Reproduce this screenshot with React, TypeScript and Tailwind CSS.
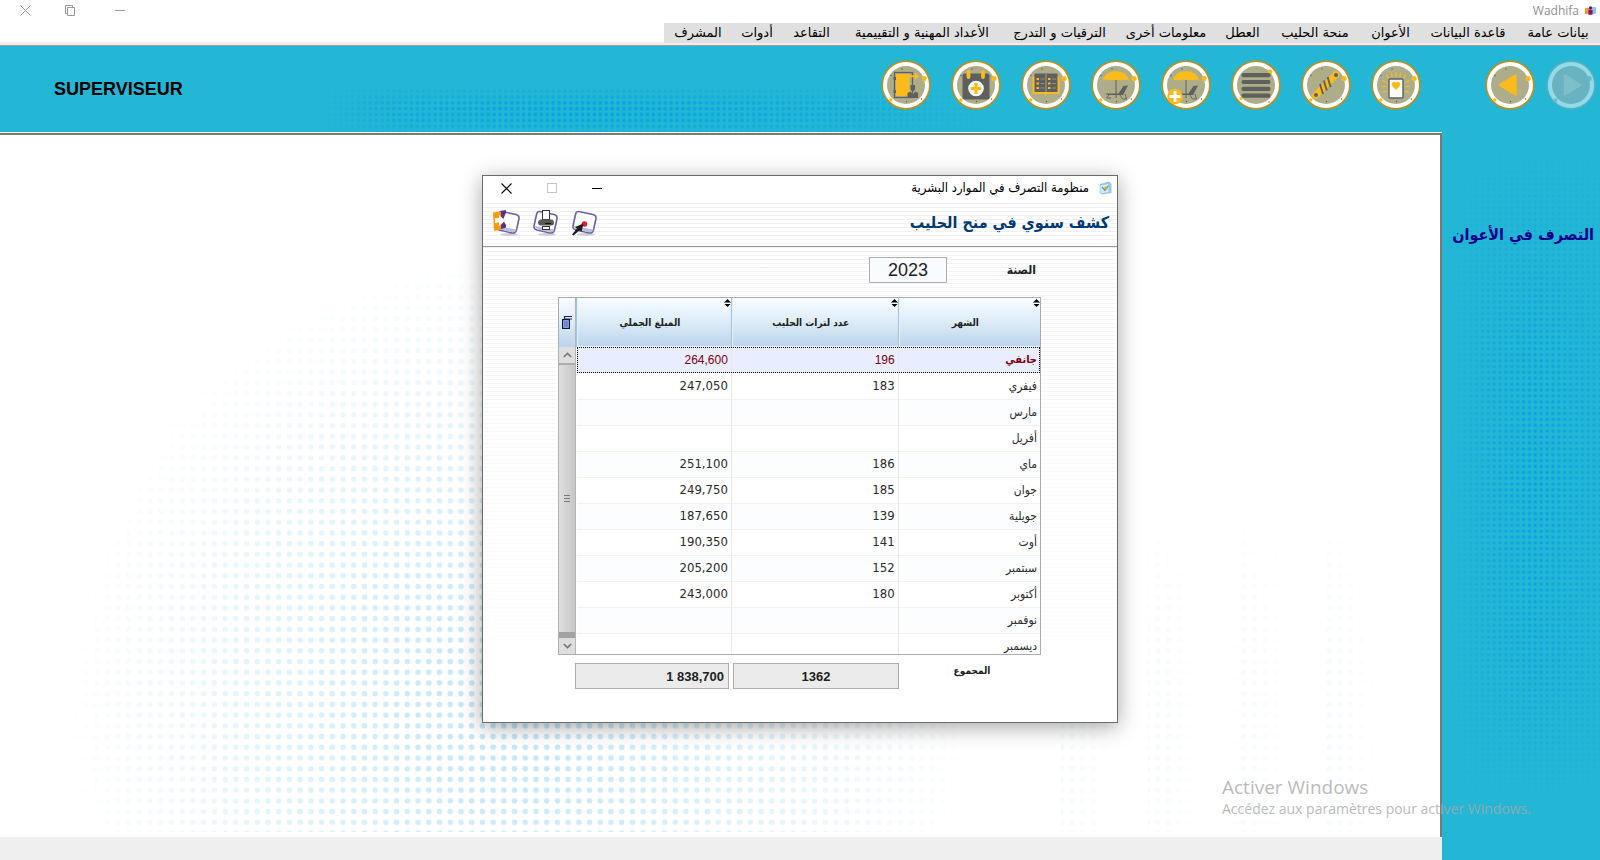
import React from 'react';

// =====================================================
// Types
// =====================================================

interface MenuEntry {
  label: string;
  width: string;
}

interface MilkRow {
  month: string;
  liters: string;
  amount: string;
}

// =====================================================
// Data
// =====================================================

const menuEntries: MenuEntry[] = [
  { label: 'بيانات عامة', width: 'w-[84px]' },
  { label: 'قاعدة البيانات', width: 'w-[96px]' },
  { label: 'الأعوان', width: 'w-[59px]' },
  { label: 'منحة الحليب', width: 'w-[92px]' },
  { label: 'العطل', width: 'w-[53px]' },
  { label: 'معلومات أخرى', width: 'w-[100px]' },
  { label: 'الترقيات و التدرج', width: 'w-[113px]' },
  { label: 'الأعداد المهنية و التقييمية', width: 'w-[162px]' },
  { label: 'التقاعد', width: 'w-[59px]' },
  { label: 'أدوات', width: 'w-[50px]' },
  { label: 'المشرف', width: 'w-[68px]' },
];

const milkRows: MilkRow[] = [
  { month: 'جانفي', liters: '196', amount: '264,600' },
  { month: 'فيفري', liters: '183', amount: '247,050' },
  { month: 'مارس', liters: '', amount: '' },
  { month: 'أفريل', liters: '', amount: '' },
  { month: 'ماي', liters: '186', amount: '251,100' },
  { month: 'جوان', liters: '185', amount: '249,750' },
  { month: 'جويلية', liters: '139', amount: '187,650' },
  { month: 'أوت', liters: '141', amount: '190,350' },
  { month: 'سبتمبر', liters: '152', amount: '205,200' },
  { month: 'أكتوبر', liters: '180', amount: '243,000' },
  { month: 'نوفمبر', liters: '', amount: '' },
  { month: 'ديسمبر', liters: '', amount: '' },
];

// =====================================================
// Dotted backgrounds
// =====================================================

const HeaderDots: React.FC = () => (
  <svg className="absolute left-[320px] bottom-0" width="670" height="44" aria-hidden="true">
    <defs>
      <pattern id="hd-dots" width="5.9" height="5.9" patternUnits="userSpaceOnUse">
        <circle cx="3" cy="3" r="1.9" fill="#00a2e2" />
      </pattern>
      <linearGradient id="hd-fade" x1="0" x2="1" y1="0" y2="0">
        <stop offset="0" stopColor="#fff" stopOpacity="0" />
        <stop offset="0.12" stopColor="#fff" stopOpacity="0.6" />
        <stop offset="0.4" stopColor="#fff" stopOpacity="0.9" />
        <stop offset="0.8" stopColor="#fff" stopOpacity="0.5" />
        <stop offset="1" stopColor="#fff" stopOpacity="0" />
      </linearGradient>
      <linearGradient id="hd-edge" x1="0" x2="0" y1="0" y2="1">
        <stop offset="0" stopColor="#000" stopOpacity="0.8" />
        <stop offset="0.4" stopColor="#000" stopOpacity="0" />
        <stop offset="0.7" stopColor="#000" stopOpacity="0" />
        <stop offset="1" stopColor="#000" stopOpacity="0.6" />
      </linearGradient>
      <mask id="hd-mask">
        <rect width="670" height="44" fill="url(#hd-fade)" />
        <rect width="670" height="44" fill="url(#hd-edge)" />
      </mask>
    </defs>
    <rect width="670" height="44" fill="url(#hd-dots)" mask="url(#hd-mask)" />
  </svg>
);

const SidebarDots: React.FC = () => (
  <svg className="absolute right-0 top-[14px]" width="150" height="652" aria-hidden="true">
    <defs>
      <pattern id="sd-dots" width="5.88" height="5.88" patternUnits="userSpaceOnUse">
        <circle cx="3" cy="3" r="1.700" fill="#009fe3" />
      </pattern>
      <linearGradient id="sd-fade" x1="0" x2="1" y1="0" y2="0">
        <stop offset="0" stopColor="#fff" stopOpacity="0" />
        <stop offset="0.2" stopColor="#fff" stopOpacity="0.45" />
        <stop offset="0.55" stopColor="#fff" stopOpacity="0.95" />
        <stop offset="1" stopColor="#fff" stopOpacity="0.5" />
      </linearGradient>
      <linearGradient id="sd-edge" x1="0" x2="0" y1="0" y2="1">
        <stop offset="0" stopColor="#000" />
        <stop offset="0.3" stopColor="#000" stopOpacity="0.2" />
        <stop offset="0.5" stopColor="#000" stopOpacity="0" />
        <stop offset="0.8" stopColor="#000" stopOpacity="0.3" />
        <stop offset="1" stopColor="#000" />
      </linearGradient>
      <mask id="sd-mask">
        <rect width="150" height="652" fill="url(#sd-fade)" />
        <rect width="150" height="652" fill="url(#sd-edge)" />
      </mask>
    </defs>
    <rect width="150" height="652" fill="url(#sd-dots)" mask="url(#sd-mask)" />
  </svg>
);

const DesktopDots: React.FC = () => (
  <svg className="absolute left-0 top-0 h-full w-full" aria-hidden="true">
    <defs>
      <pattern id="dd-dots" x="5.3" y="6.5" width="10.72" height="10.72" patternUnits="userSpaceOnUse">
        <circle cx="5.4" cy="5.4" r="2.8" fill="#bfe6f8" />
      </pattern>
      <radialGradient id="dd-fade" gradientUnits="userSpaceOnUse" cx="520" cy="570" r="460">
        <stop offset="0" stopColor="#fff" />
        <stop offset="0.2" stopColor="#fff" stopOpacity="0.85" />
        <stop offset="1" stopColor="#fff" stopOpacity="0" />
      </radialGradient>
      <linearGradient id="dd-band" x1="0" x2="1" y1="0" y2="0">
        <stop offset="0" stopColor="#fff" stopOpacity="0.18" />
        <stop offset="1" stopColor="#fff" stopOpacity="0" />
      </linearGradient>
      <linearGradient id="dd-rise" x1="0" x2="0" y1="0" y2="1">
        <stop offset="0" stopColor="#000" />
        <stop offset="0.5" stopColor="#000" stopOpacity="0" />
      </linearGradient>
      <mask id="dd-mask" maskUnits="userSpaceOnUse" x="0" y="0" width="1440" height="900">
        <rect width="1440" height="900" fill="url(#dd-fade)" />
        <rect x="1061" y="340" width="60" height="360" fill="url(#dd-band)" />
        <rect x="1148" y="340" width="60" height="360" fill="url(#dd-band)" />
        <rect x="1235" y="340" width="60" height="360" fill="url(#dd-band)" />
        <rect x="1322" y="340" width="60" height="360" fill="url(#dd-band)" />
        <rect x="1061" y="340" width="360" height="360" fill="url(#dd-rise)" />
      </mask>
    </defs>
    <rect width="1440" height="697" fill="url(#dd-dots)" mask="url(#dd-mask)" />
  </svg>
);

// =====================================================
// Toolbar icons
// =====================================================

const Medallion: React.FC<{ children: React.ReactNode }> = ({ children }) => (
  <svg width="50" height="50" viewBox="0 0 50 50" aria-hidden="true">
    <circle cx="25" cy="25" r="23.8" fill="#fff" stroke="#c68d14" strokeWidth="1.6" />
    <circle cx="25" cy="25" r="19" fill="#aead89" />
    <g fill="#5a5a5a">
      <circle cx="21" cy="9" r="0.7" />
      <circle cx="10" cy="15.500" r="0.7" />
      <circle cx="25.500" cy="41.500" r="0.7" />
      <circle cx="40.500" cy="39" r="0.7" />
    </g>
    <circle cx="43" cy="18.500" r="2.600" fill="#fbbb1c" />
    <circle cx="9.800" cy="40" r="1.700" fill="#fbbb1c" />
    {children}
  </svg>
);

const DoorIcon: React.FC = () => (
  <Medallion>
    <rect x="13.500" y="12.500" width="18" height="25" fill="none" stroke="#5f5f5f" strokeWidth="1.300" />
    <rect x="15" y="14" width="13.500" height="22" fill="#fbbb1c" />
    <path d="M24 15.300h10v-2.600l4.200 3.600-4.200 3.600v-2.600h-10z" fill="#fbbb1c" />
    <path d="M12.500 17h2.500v3h-2.500zM12.500 30h2.500v3h-2.500z" fill="#5f5f5f" />
    <path d="M29.500 25h4.600v3.500a2.300 2.600 0 0 1-4.600 0z" fill="#5f5f5f" />
    <path d="M26.500 38v-5l3-1.500 2.300 3.500 2.300-3.500 3 1.500v5z" fill="#5f5f5f" />
  </Medallion>
);

const CalendarIcon: React.FC = () => (
  <Medallion>
    <rect x="11.500" y="13.500" width="27" height="26" rx="2" fill="#5f5f5f" />
    <path d="M17.500 12v5M32 12v5" stroke="#fbbb1c" strokeWidth="3.800" strokeLinecap="round" />
    <circle cx="25" cy="28.500" r="7.800" fill="#fff" />
    <path d="M25 23v11M19.500 28.500h11" stroke="#fbbb1c" strokeWidth="3.200" />
  </Medallion>
);

const BookIcon: React.FC = () => (
  <Medallion>
    <path d="M11.500 16.500v17.500H23l1.500 2 1.500-2h12.500V16.500z" fill="#fbbb1c" />
    <rect x="13.500" y="13.500" width="23" height="18.500" fill="#5f5f5f" />
    <path d="M25 14v18" stroke="#aead89" strokeWidth="0.900" />
    <path d="M15.500 19H18M15.500 23.500H18M15.500 28H18M27 19h2.500M27 23.500h2.500M27 28h2.500" stroke="#fbbb1c" strokeWidth="2.200" />
    <path d="M19.500 19h4M19.500 23.500h4M19.500 28h4M31 19h4M31 23.500h4M31 28h4" stroke="#9a9a85" strokeWidth="0.800" />
  </Medallion>
);

const Beach: React.FC = () => (
  <>
    <path d="M12 20.500C13 14 19 11.300 25 11.300S37 14 38 20.500q-2-1.600-4.200 0-2.200-1.600-4.400 0-2.200-1.600-4.400 0-2.200-1.600-4.400 0-2.200-1.600-4.400 0-2.200-1.600-4.200 0z" fill="#fbbb1c" />
    <path d="M25 20v18" stroke="#5f5f5f" strokeWidth="1" />
    <path d="M15 33.500h12.500l5-7.500 4.500-.5-5 9.500H16z" fill="#5f5f5f" />
    <path d="M18 35l-2.500 3h4.500M29 35l2.500 4h4l-1.500-5" fill="none" stroke="#5f5f5f" strokeWidth="0.900" />
  </>
);

const UmbrellaIcon: React.FC = () => (
  <Medallion>
    <Beach />
  </Medallion>
);

const UmbrellaPlusIcon: React.FC = () => (
  <Medallion>
    <Beach />
    <circle cx="14" cy="36.500" r="7.700" fill="#fbbb1c" />
    <path d="M14 31v11M8.500 36.500h11" stroke="#fff" strokeWidth="2.800" />
  </Medallion>
);

const LinesIcon: React.FC = () => (
  <svg width="50" height="50" viewBox="0 0 50 50" aria-hidden="true">
    <circle cx="25" cy="25" r="23.8" fill="#fff" stroke="#c68d14" strokeWidth="1.6" />
    <circle cx="25" cy="25" r="19" fill="#aead89" />
    <circle cx="39" cy="12" r="2.400" fill="#fbbb1c" />
    <circle cx="10" cy="38.500" r="1.500" fill="#fbbb1c" />
    <circle cx="38" cy="42" r="0.7" fill="#5a5a5a" />
    <path d="M12.500 15.200h25M12.500 22h25M12.500 28.900h25M12.500 35.700h25" stroke="#5f5f5f" strokeWidth="4.200" strokeLinecap="round" />
  </svg>
);

const BandageIcon: React.FC = () => (
  <Medallion>
    <path d="M14.500 35.500L35 14.500" stroke="#fbbb1c" strokeWidth="6.600" strokeLinecap="round" />
    <circle cx="15" cy="35" r="2" fill="#5f5f5f" />
    <circle cx="35" cy="15" r="2" fill="#5f5f5f" />
    <path d="M19 24l3 10M22.800 20.500l3 10M26.600 17l3 10" stroke="#5f5f5f" strokeWidth="1.900" />
  </Medallion>
);

const HeartCardIcon: React.FC = () => (
  <Medallion>
    <path d="M25 12v5M20 12.500l1.500 4.500M30 12.500L28.500 17M15 15l3 4M35 15l-3 4M11.500 20.500l5 2.500M38.500 20.500l-5 2.500M11 26.500h5M39 26.500h-5M12 32.500l4-1.500M38 32.500L34 31" stroke="#fbbb1c" strokeWidth="1.200" />
    <rect x="18" y="19" width="14" height="19" rx="1" fill="#fff" stroke="#5f5f5f" strokeWidth="1.400" />
    <path d="M25 30l-3.900-4a2.700 2.700 0 0 1 3.900-3.600 2.700 2.700 0 0 1 3.900 3.600z" fill="#fbbb1c" />
  </Medallion>
);

const BackIcon: React.FC = () => (
  <Medallion>
    <path d="M15 25L30.500 15.500V34.500z" fill="#fbbb1c" stroke="#fbbb1c" strokeWidth="2.400" strokeLinejoin="round" />
  </Medallion>
);

const ForwardIcon: React.FC = () => (
  <svg width="50" height="50" viewBox="0 0 50 50" aria-hidden="true">
    <circle cx="25" cy="25" r="23.800" fill="#92dbec" stroke="#5caebd" strokeWidth="1.400" />
    <circle cx="25" cy="25" r="19" fill="#69b2c1" />
    <circle cx="43" cy="18.500" r="2.600" fill="#69b8c4" />
    <circle cx="9.800" cy="40" r="1.700" fill="#69b8c4" />
    <path d="M34 25L19 15.500V34.500z" fill="#7fbfca" stroke="#7fbfca" strokeWidth="2.400" strokeLinejoin="round" />
  </svg>
);

const toolButtons = [
  { label: 'منحة', icon: <HeartCardIcon /> },
  { label: 'حوادث الشغل', icon: <BandageIcon /> },
  { label: 'قائمة', icon: <LinesIcon /> },
  { label: 'إضافة عطلة', icon: <UmbrellaPlusIcon /> },
  { label: 'العطل', icon: <UmbrellaIcon /> },
  { label: 'دفتر', icon: <BookIcon /> },
  { label: 'عطلة مرض', icon: <CalendarIcon /> },
  { label: 'خروج', icon: <DoorIcon /> },
];

// =====================================================
// Dialog icons
// =====================================================

const TileFrame: React.FC = () => (
  <>
    <ellipse cx="15" cy="25.500" rx="9" ry="1.500" fill="#cfcfd6" />
    <path d="M7.500 2.500L22 5.500q3.500 1 3 4L22.500 21q-1 3.500-4.500 3L5 21q-3.500-1-3-4L4.500 5.500q.6-3.200 3-3z" fill="#fff" stroke="#6c62a2" strokeWidth="1.600" />
    <path d="M3 17l19.500 3.500q-1 3-4 2.700L5.500 20.300Q3 19.500 3 17z" fill="#b9bfda" />
  </>
);

const ExitIcon: React.FC = () => (
  <svg width="27" height="28" viewBox="0 0 27 28" aria-hidden="true">
    <g transform="translate(1 0)">
      <TileFrame />
    </g>
    <path d="M7 2l6-1v2.500l-3 7.500 3 5v2.500l-6 2z" fill="#55308f" />
    <path d="M0 3.500l8-1v5l4 4-4 4.500v4.500l-7 1.500z" fill="#ff9a0a" />
    <path d="M2 9l4 .2V6l6 5.500-6 5.500v-3.500l-4 .5z" fill="#fff" />
  </svg>
);

const PrintIcon: React.FC = () => (
  <svg width="27" height="28" viewBox="0 0 27 28" aria-hidden="true">
    <TileFrame />
    <rect x="10.500" y="1.500" width="7" height="9" fill="#fff" stroke="#333" />
    <path d="M8 10.500h12.500q1.500 1 1.500 3.500 0 2-2 2.500H8.500q-2.500-.5-2.500-2.500 0-2.500 2-3.500z" fill="#5a5a5a" />
    <path d="M13 14.500h6" stroke="#111" strokeWidth="1.200" />
    <rect x="10.500" y="17.500" width="7" height="3" fill="#fff" stroke="#333" />
  </svg>
);

const PickIcon: React.FC = () => (
  <svg width="27" height="28" viewBox="0 0 27 28" aria-hidden="true">
    <TileFrame />
    <circle cx="13.500" cy="15" r="2.800" fill="#ec1c2e" />
    <path d="M1 25.500l5-6-2-1.500 8.500-3.500-2 8.500-2-1.700-6 5.200z" fill="#1c1c1c" />
  </svg>
);

const SortIcon: React.FC = () => (
  <svg className="absolute right-0 top-[1px]" width="7" height="8" viewBox="0 0 7 8" aria-hidden="true">
    <path d="M3.500 0L6.500 3h-6zM3.500 8L6.500 5h-6zM0 3.500h7v.6H0z" fill="#000" />
  </svg>
);

// =====================================================
// Table
// =====================================================

const HeadCell: React.FC<{ width: string; children: React.ReactNode }> = ({ width, children }) => (
  <th
    scope="col"
    className={`relative h-[49px] ${width} border-l border-[#9cc4e0] bg-gradient-to-b from-[#f8fcff] via-[#dcebf7] to-[#b9d4ec] p-0 font-['DejaVu_Sans_Condensed','DejaVu_Sans',sans-serif] text-[10px] font-bold text-[#222] shadow-[inset_1px_-1px_0_#e6f3fc]`}
  >
    <SortIcon />
    <span className="pr-2">{children}</span>
  </th>
);

const MilkTable: React.FC = () => (
  <div className="flex h-[358px] overflow-hidden border border-[#adadad] bg-white">
    <table className="grow table-fixed self-start border-collapse">
      <thead>
        <tr>
          <HeadCell width="w-[142px]">الشهر</HeadCell>
          <HeadCell width="w-[167px]">عدد لترات الحليب</HeadCell>
          <HeadCell width="w-[155px]">المبلغ الجملي</HeadCell>
        </tr>
      </thead>
      <tbody>
        {milkRows.map((row, index) => {
          const selected = index === 0;
          const rowClass = selected
            ? 'h-[26px] bg-[#e8edff] text-[#7c0009] outline outline-1 -outline-offset-1 outline-dotted outline-black'
            : 'h-[26px] border-b border-[#eff2ef] text-[#2b2b2b] even:bg-white odd:bg-[#fbfdff]';
          const monthClass = selected
            ? "font-['DejaVu_Sans_Condensed','DejaVu_Sans',sans-serif] text-[11px] font-bold"
            : 'text-[12px]';
          const numberClass = selected
            ? "font-['Liberation_Sans'] text-[12px]"
            : "font-['DejaVu_Sans_Condensed','DejaVu_Sans',sans-serif] text-[13px]";
          return (
            <tr key={row.month} className={rowClass}>
              <td className={`border-l border-[#e9ecdc] p-0 pr-[3px] leading-4 ${monthClass}`}>{row.month}</td>
              <td dir="ltr" className={`border-l border-[#e9ecdc] p-0 pr-[3px] text-right leading-4 ${numberClass}`}>{row.liters}</td>
              <td dir="ltr" className={`p-0 pr-[3px] text-right leading-4 ${numberClass}`}>{row.amount}</td>
            </tr>
          );
        })}
      </tbody>
    </table>

    {/* scroll bar */}
    <div className="flex w-[17px] shrink-0 flex-col border-r border-[#b5b5b5] bg-[#d2d2d2]">
      <button type="button" aria-label="الأعمدة" className="flex h-[49px] items-center justify-center bg-gradient-to-b from-[#f8fcff] via-[#dcebf7] to-[#b9d4ec]">
        <svg width="10" height="13" viewBox="0 0 10 13" aria-hidden="true">
          <path d="M2 .5h8M2.500 0v4M2 3h8" stroke="#16205c" strokeWidth="1.200" />
          <rect x=".6" y="3.600" width="6.800" height="8.800" fill="#a9c0f5" stroke="#10153a" strokeWidth="1.200" />
          <path d="M2 6h4M2 8h4M2 10h4" stroke="#3c51b8" />
        </svg>
      </button>
      <button type="button" aria-label="أعلى" className="flex h-4 items-center justify-center bg-[#dedede]">
        <svg width="9" height="6" viewBox="0 0 9 6" aria-hidden="true">
          <path d="M.8 5l3.700-3.500L8.200 5" fill="none" stroke="#777" strokeWidth="1.700" />
        </svg>
      </button>
      <div className="flex grow flex-col items-center justify-center gap-[2px] border-t-2 border-[#adadad] bg-gradient-to-r from-[#dfdfdf] to-[#c6c6c6]">
        <span className="h-px w-[6px] bg-[#777]"></span>
        <span className="h-px w-[6px] bg-[#777]"></span>
        <span className="h-px w-[6px] bg-[#777]"></span>
      </div>
      <div className="h-[6px] bg-[#a3a3a3]"></div>
      <button type="button" aria-label="أسفل" className="flex h-4 items-center justify-center bg-[#dedede]">
        <svg width="9" height="6" viewBox="0 0 9 6" aria-hidden="true">
          <path d="M.8 1l3.700 3.500L8.200 1" fill="none" stroke="#777" strokeWidth="1.700" />
        </svg>
      </button>
    </div>
  </div>
);

// =====================================================
// Dialog
// =====================================================

const MilkDialog: React.FC = () => (
  <section
    role="dialog"
    aria-labelledby="milk-title"
    className="absolute left-1/2 top-[175px] w-[636px] -translate-x-1/2 border border-[#6a6a6a] bg-white font-['DejaVu_Sans_Condensed','DejaVu_Sans',sans-serif] shadow-[0_4px_20px_rgba(0,0,0,0.35)]"
  >
    <div className="flex h-[24px] items-center gap-[10px] pr-[5px] pl-[13px] text-[13px] text-black">
      <svg width="13" height="14" viewBox="0 0 13 14" aria-hidden="true">
        <path d="M1 3L10 .5 12.500 3v9L3 13.500.5 12z" fill="#8fcbe4" />
        <path d="M1.500 4.500l8-1.500v8l-8 1.500z" fill="#d8eef7" />
        <path d="M3 6l3 3.500 3.500-5" fill="none" stroke="#4f93b3" strokeWidth="1.200" />
        <circle cx="7" cy="7" r="1.800" fill="#d9a441" />
      </svg>
      <span className="grow">منظومة التصرف في الموارد البشرية</span>
      <button type="button" aria-label="تصغير" className="flex w-[20px] justify-center">
        <svg width="10" height="11"><path d="M0 5.500h10" stroke="#000" /></svg>
      </button>
      <button type="button" aria-label="تكبير" disabled className="mr-[15px] flex w-[20px] justify-center">
        <svg width="10" height="10"><rect x=".5" y=".5" width="9" height="9" fill="none" stroke="#c4c4c4" /></svg>
      </button>
      <button type="button" aria-label="إغلاق" className="mr-[16px] flex w-[20px] justify-center">
        <svg width="11" height="11"><path d="M.5.5l10 10M10.500.5l-10 10" stroke="#000" strokeWidth="1.100" /></svg>
      </button>
    </div>

    <div className="bg-[linear-gradient(to_bottom,rgba(255,255,255,0.1)_0%,#fff_95%),repeating-linear-gradient(to_bottom,#fff_0px,#fff_3px,#efefef_3px,#efefef_4px)]">
      <header className="flex h-[47px] items-center gap-[12px] border-b border-[#999] pr-[8px] pl-[10px]">
        <h1 id="milk-title" className="grow text-[16px] leading-6 font-bold text-[#003a75]">كشف سنوي في منح الحليب</h1>
        <button type="button" aria-label="اختيار"><PickIcon /></button>
        <button type="button" aria-label="طباعة"><PrintIcon /></button>
        <button type="button" aria-label="خروج"><ExitIcon /></button>
      </header>

      <div className="pt-[10px] pr-[76px] pb-[33px] pl-[75px]">
        <div className="flex items-center">
          <label htmlFor="year" className="w-[94px] pr-[5px] text-[12px] font-bold text-[#222]">الصنة</label>
          <input
            id="year"
            dir="ltr"
            defaultValue="2023"
            className="h-[26px] w-[78px] border border-[#adadad] bg-[#f8fbff] text-center font-['Liberation_Sans'] text-[18px] text-[#222]"
          />
        </div>

        <div className="pt-[14px] pb-[8px]">
          <MilkTable />
        </div>

        <div className="flex items-start gap-[4px]">
          <span id="total-label" className="w-[138px] text-center text-[10px] leading-4 font-bold text-[#222]">المجموع</span>
          <input
            readOnly
            dir="ltr"
            aria-labelledby="total-label"
            value="1362"
            className="h-[26px] w-[166px] border border-[#adadad] bg-[#ebebeb] text-center font-['Liberation_Sans'] text-[13px] font-bold text-[#222]"
          />
          <input
            readOnly
            dir="ltr"
            aria-labelledby="total-label"
            value="1 838,700"
            className="h-[26px] w-[154px] border border-[#adadad] bg-[#ebebeb] pr-[4px] text-right font-['Liberation_Sans'] text-[13px] font-bold text-[#222]"
          />
        </div>
      </div>
    </div>
  </section>
);

// =====================================================
// Main component
// =====================================================

const App: React.FC = () => {
  return (
    <div dir="rtl" className="relative flex min-h-screen flex-col overflow-hidden bg-white font-['DejaVu_Sans',sans-serif]">
      {/* title bar */}
      <div className="flex h-[23px] items-center gap-[6px] pr-[4px] pb-[2px] pl-[18px]">
        <svg width="11" height="11" viewBox="0 0 13 12" aria-hidden="true">
          <rect x="0" y="3" width="5" height="7" rx="1" fill="#e9a21c" />
          <rect x="8" y="2" width="5" height="8" rx="1" fill="#8ec8e6" />
          <circle cx="6.500" cy="3" r="2" fill="#6d1572" />
          <rect x="4" y="5" width="5" height="6" rx="1" fill="#8c1079" />
        </svg>
        <span className="grow font-['Open_Sans'] text-[12px] text-[#8f8f8f]">Wadhifa</span>
        <button type="button" aria-label="تصغير" className="flex w-[14px] justify-center">
          <svg width="10" height="11"><path d="M0 5.500h10" stroke="#999" /></svg>
        </button>
        <button type="button" aria-label="استعادة" className="mr-[30px] flex w-[14px] justify-center">
          <svg width="11" height="11">
            <path d="M2.500 8.500h-2v-8h7v2M2.500 2.500h7v8h-7z" fill="none" stroke="#999" />
          </svg>
        </button>
        <button type="button" aria-label="إغلاق" className="mr-[25px] flex w-[14px] justify-center">
          <svg width="11" height="11"><path d="M.5.5l10 10M10.500.5l-10 10" stroke="#999" /></svg>
        </button>
      </div>

      {/* menu bar */}
      <div className="flex h-[23px] border-b border-[#a39a9a] bg-gradient-to-b from-white from-85% to-[#eeeeee] to-85%">
        <nav className="flex h-[20px] bg-[#e0e0e0]">
          {menuEntries.map((entry) => (
            <button key={entry.label} type="button" className={`${entry.width} text-center text-[13px] leading-5 whitespace-nowrap text-black`}>
              {entry.label}
            </button>
          ))}
        </nav>
      </div>

      {/* toolbar */}
      <header className="relative flex h-[86px] items-center bg-[#24b6d5] pr-[4px] pb-[8px] pl-[54px]">
        <HeaderDots />
        <button type="button" aria-label="التالي" disabled><ForwardIcon /></button>
        <button type="button" aria-label="السابق" className="mr-[11px]"><BackIcon /></button>
        <div className="relative mr-[64px] flex grow gap-[20px]">
          {toolButtons.map((tool) => (
            <button key={tool.label} type="button" aria-label={tool.label}>{tool.icon}</button>
          ))}
        </div>
        <span className="pt-[8px] font-['Liberation_Sans'] text-[18px] leading-6 font-bold text-black">SUPERVISEUR</span>
      </header>

      <div className="flex grow">
        {/* sidebar */}
        <aside className="relative w-[158px] shrink-0 bg-[#24b6d5]">
          <SidebarDots />
          <h2 className="relative pt-[91px] pr-[6px] font-['DejaVu_Sans_Condensed','DejaVu_Sans',sans-serif] text-[16px] leading-6 font-bold whitespace-nowrap text-[#00008b]">التصرف في الأعوان</h2>
        </aside>

        <div className="flex grow flex-col border-t border-white">
          <main className="relative grow border-t-2 border-r-2 border-[#77797c]">
            <DesktopDots />
          </main>
          <footer className="h-[23px] bg-[#efefef]"></footer>
        </div>
      </div>

      <MilkDialog />

      {/* activation notice */}
      <div dir="ltr" className="pointer-events-none absolute right-[64px] bottom-[41px] w-[314px] font-['Open_Sans'] whitespace-nowrap text-[#a8a8a8]/80">
        <p className="text-[19px] leading-6">Activer Windows</p>
        <p className="text-[14px] leading-5">Accédez aux paramètres pour activer Windows.</p>
      </div>
    </div>
  );
};

export default App;
